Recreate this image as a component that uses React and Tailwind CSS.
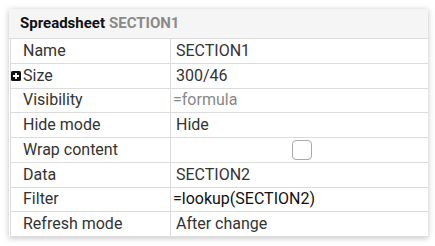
import React from "react";

const rows = [
  { label: "Name", value: "SECTION1" },
  { label: "Size", value: "300/46", plus: true },
  { label: "Visibility", value: "=formula", formula: true, muted: true },
  { label: "Hide mode", value: "Hide" },
  { label: "Wrap content", checkbox: true },
  { label: "Data", value: "SECTION2" },
  { label: "Filter", value: "=lookup(SECTION2)", formula: true },
  { label: "Refresh mode", value: "After change" },
];

const PlusBox = () => (
  <svg width="10" height="10" viewBox="0 0 10 10" className="mr-[2px]">
    <rect x="0" y="0" width="10" height="10" rx="1.5" fill="#111" />
    <path d="M5 2v6M2 5h6" stroke="#fff" strokeWidth="1.8" />
  </svg>
);

export default function App() {
  return (
    <div className="w-[435px] h-[246px] bg-white p-[9px] pr-[7px] font-['Roboto',sans-serif]">
      <div className="w-[419px] bg-white shadow-[0_1px_6px_rgba(0,0,0,0.25)]">
        <div className="h-[30px] flex items-center pl-[11px] bg-[#f5f5f5] border-b border-[#dcdcdc] text-[15px] font-bold">
          <span className="text-[#111]">Spreadsheet</span>
          <span className="ml-[4px] text-[#8a8a8a]">SECTION1</span>
        </div>
        <div className="ml-[1px]">
          {rows.map((r) => (
            <div key={r.label} className="flex h-[24.75px] border-b border-l border-[#dcdcdc] text-[16px] text-[#333]">
              <div className="w-[160px] flex items-center border-r border-[#dcdcdc]">
                {r.plus ? (
                  <>
                    <PlusBox />
                    <span>{r.label}</span>
                  </>
                ) : (
                  <span className="pl-[12px]">{r.label}</span>
                )}
              </div>
              <div className={"flex-1 flex items-center " + (r.formula ? "pl-[2px]" : "pl-[5px]")}>
                {r.checkbox ? (
                  <div className="mx-auto w-[20px] h-[20px] rounded-[4px] border border-[#aaa] bg-white" />
                ) : (
                  <span className={r.muted ? "text-[#888]" : r.formula ? "text-[#111]" : ""}>{r.value}</span>
                )}
              </div>
            </div>
          ))}
        </div>
      </div>
    </div>
  );
}
